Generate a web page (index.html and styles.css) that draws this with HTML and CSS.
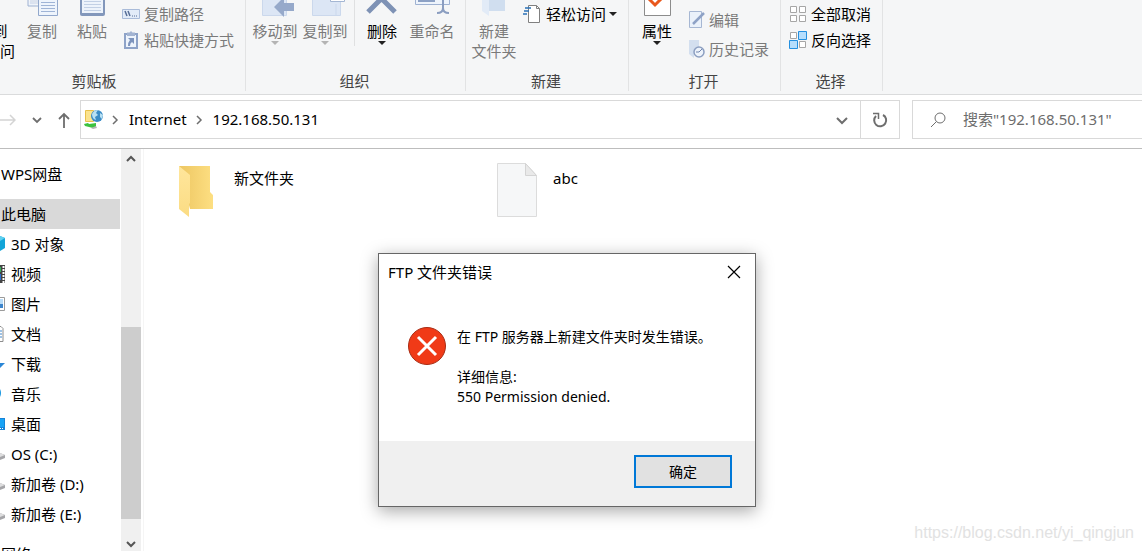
FILE: index.html
```html
<!DOCTYPE html>
<html lang="zh-CN">
<head>
    <meta charset="UTF-8" />
    <meta name="viewport" content="width=device-width, initial-scale=1.0" />
    <title>192.168.50.131</title>
    <link rel="stylesheet" href="styles.css">
</head>
<body>

<header class="ribbon">
    <section class="group group-clipboard">
        <div class="tools">
            <button class="big pin"><svg width="40" height="18"></svg>固定到<br>快速访问</button>
            <button class="big" disabled>
                <svg width="40" height="18" viewBox="0 0 40 18">
                    <path d="M6 0v6h10" fill="#eef3fa" stroke="#9fb2d2"/>
                    <path d="M8 1h8M8 3h8" stroke="#c3d0e6"/>
                    <path d="M16.500-1h19v16.500h-19z" fill="#eef4fc" stroke="#92a8cc"/>
                    <path d="M19 2.500h14M19 5.500h14M19 8.500h14M19 11.500h14" stroke="#9fb4d6"/>
                </svg>
                复制
            </button>
            <button class="big" disabled>
                <svg width="40" height="18" viewBox="0 0 40 18">
                    <path d="M8 0h25v14q0 2-2 2H10q-2 0-2-2z" fill="#8297bb"/>
                    <path d="M10 0h21v13H10z" fill="#edf3fb"/>
                    <path d="M12 1.500h17M12 4.500h17M12 7.500h17M12 10.500h17" stroke="#c2d0e5"/>
                </svg>
                粘贴
            </button>
            <div class="small-list">
                <button class="small" disabled>
                    <svg width="18" height="18" viewBox="0 0 18 18">
                        <path d="M.5 4.500h17v9H.5z" fill="#e2ebf8" stroke="#a9bbd9"/>
                        <path d="M3 6l2 5M6 6l2 5" stroke="#566d96" stroke-width="1.500"/>
                        <path d="M10 11h1M12 11h1M14 11h1" stroke="#566d96"/>
                    </svg>
                    复制路径
                </button>
                <button class="small" disabled>
                    <svg width="18" height="18" viewBox="0 0 18 18">
                        <path d="M3 3h12v14H3z" fill="#eef4fc" stroke="#8ea3c8" stroke-width="2"/>
                        <path d="M5 1.500h2.500L9 0l1.500 1.500H13V5H5z" fill="#a3b4d2"/>
                        <path d="M6 7h6v6l-2-2q-2 1-2 4H6q0-4 2-6z" fill="#7d94bd"/>
                    </svg>
                    粘贴快捷方式
                </button>
            </div>
        </div>
        <h2>剪贴板</h2>
    </section>

    <section class="group group-organize">
        <div class="tools">
            <button class="big" disabled>
                <svg width="40" height="18" viewBox="0 0 40 18">
                    <path d="M7.500-1h24v16.500h-24z" fill="#dce6f5" stroke="#cbd8ec"/>
                    <path d="M19 7l10-10v6h10v8H29v6z" fill="#96a9ca"/>
                </svg>
                移动到
                <i class="caret"></i>
            </button>
            <button class="big" disabled>
                <svg width="40" height="18" viewBox="0 0 40 18">
                    <path d="M7.500-1h28v16.500h-28zM31 4v12" fill="#dce6f5" stroke="#cbd8ec"/>
                    <path d="M25.500-1h14v2.500h-14z" fill="#fff" stroke="#a4b6d3"/>
                </svg>
                复制到
                <i class="caret"></i>
            </button>
            <span class="divider"></span>
            <button class="big">
                <svg width="40" height="18" viewBox="0 0 40 18">
                    <path d="M6 12L19-1M20-1l13 13" stroke="#7e92b5" stroke-width="5"/>
                </svg>
                删除
                <i class="caret"></i>
            </button>
            <button class="big" disabled>
                <svg width="40" height="18" viewBox="0 0 40 18">
                    <path d="M3.500-1h34v5.500h-34z" fill="#eef4fc" stroke="#9fb2d2"/>
                    <path d="M6 0h17v2H6z" fill="#8ca1c5"/>
                    <path d="M31 0v8q0 5-6 5M31 8q0 5 6 5" fill="none" stroke="#8a9dc0" stroke-width="2"/>
                </svg>
                重命名
            </button>
        </div>
        <h2>组织</h2>
    </section>

    <section class="group group-new">
        <div class="tools">
            <button class="big" disabled>
                <svg width="40" height="18" viewBox="0 0 40 18">
                    <path d="M15 0h16v11H15z" fill="#d0deef"/>
                    <path d="M8 0h7v16l-7-5z" fill="#e2ebf7"/>
                </svg>
                新建<br>文件夹
            </button>
            <div class="small-list">
                <button class="small">
                    <svg width="20" height="20" viewBox="0 0 20 20">
                        <path d="M5.500 1.500h8l3 3v14h-11z" fill="#fff" stroke="#808080"/>
                        <path d="M13.500 1.500v3h3" fill="none" stroke="#808080"/>
                        <path d="M2 4h6M1 7h5M0 10h4" stroke="#2a72b8" stroke-width="1.500"/>
                    </svg>
                    轻松访问
                    <i class="caret"></i>
                </button>
            </div>
        </div>
        <h2>新建</h2>
    </section>

    <section class="group group-open">
        <div class="tools">
            <button class="big">
                <svg width="40" height="18" viewBox="0 0 40 18">
                    <path d="M7.500-1h26v16.500h-26z" fill="#fff" stroke="#8c8c8c"/>
                    <path d="M12-1l6 6 8-8" fill="none" stroke="#e9581c" stroke-width="3"/>
                </svg>
                属性
                <i class="caret"></i>
            </button>
            <div class="small-list">
                <button class="small" disabled>
                    <svg width="16" height="18" viewBox="0 0 16 18">
                        <path d="M.5.5h12v16H.5z" fill="#eaf1fa" stroke="#a6b7d3"/>
                        <path d="M4 13L15 2" stroke="#8ea2c6" stroke-width="2.500"/>
                    </svg>
                    编辑
                </button>
                <button class="small" disabled>
                    <svg width="16" height="18" viewBox="0 0 16 18">
                        <path d="M0 0h10v14H5v4l-5-4z" fill="#d3dfef"/>
                        <circle cx="10" cy="12" r="5" fill="#edf3fb" stroke="#8c9fc1" stroke-width="1.500"/>
                        <path d="M10 12l3-3M10 12H7" stroke="#7387ae"/>
                    </svg>
                    历史记录
                </button>
            </div>
        </div>
        <h2>打开</h2>
    </section>

    <section class="group group-select">
        <div class="tools">
            <div class="small-list">
                <button class="small">
                    <svg width="18" height="18" viewBox="0 0 18 18" fill="#fff" stroke="#a6a6a6">
                        <path d="M1.500 1.500h6v6h-6zM10.500 1.500h6v6h-6zM1.500 10.500h6v6h-6zM10.500 10.500h6v6h-6z"/>
                    </svg>
                    全部取消
                </button>
                <button class="small">
                    <svg width="18" height="18" viewBox="0 0 18 18">
                        <path d="M1.500 1.500h6v6h-6zM10.500 10.500h6v6h-6z" fill="#fff" stroke="#a6a6a6"/>
                        <path d="M9.500.5h8v8h-8zM.5 9.500h8v8h-8z" fill="#b5defd" stroke="#2490e0"/>
                    </svg>
                    反向选择
                </button>
            </div>
        </div>
        <h2>选择</h2>
    </section>
</header>

<div class="navbar">
    <div class="history">
        <button aria-label="前进" disabled>
            <svg width="16" height="16" viewBox="0 0 16 16"><path d="M0 8h15M10 3l5 5-5 5" stroke="#d4d4d4" stroke-width="1.500" fill="none"/></svg>
        </button>
        <button aria-label="最近浏览的位置">
            <svg width="12" height="16" viewBox="0 0 12 16"><path d="M2 6l4 4 4-4" stroke="#6e6e6e" stroke-width="1.800" fill="none"/></svg>
        </button>
        <button aria-label="上移">
            <svg width="12" height="16" viewBox="0 0 12 16"><path d="M6 16V2M1 7l5-5 5 5" stroke="#6e6e6e" stroke-width="1.800" fill="none"/></svg>
        </button>
    </div>
    <div class="address">
        <svg width="20" height="22" viewBox="0 0 20 22">
            <path d="M2.500 1.500h8v11h-8z" fill="#fbe38e" stroke="#e8c14b"/>
            <circle cx="14" cy="7" r="6" fill="#3b8cc6"/>
            <path d="M9 5q2-4 6-4l-2 3 2 2-3 2 1 3q-4-1-4-6zM17 4l3 2-1 4-2-2z" fill="#b9e0f2"/>
            <path d="M1 15l4-1 1 1 7-1v4l-3 1-8-2z" fill="#3cc23f"/>
            <path d="M8 19l5-2 1 2-4 1z" fill="#b4b4b4"/>
        </svg>
        <svg class="sep" width="8" height="10" viewBox="0 0 8 10"><path d="M2 1l4 4-4 4" stroke="#6e6e6e" stroke-width="1.500" fill="none"/></svg>
        <a href="#">Internet</a>
        <svg class="sep" width="8" height="10" viewBox="0 0 8 10"><path d="M2 1l4 4-4 4" stroke="#6e6e6e" stroke-width="1.500" fill="none"/></svg>
        <a href="#">192.168.50.131</a>
        <button class="drop" aria-label="以前的位置">
            <svg width="12" height="10" viewBox="0 0 12 10"><path d="M1 3l5 5 5-5" stroke="#6e6e6e" stroke-width="2" fill="none"/></svg>
        </button>
        <button class="refresh" aria-label="刷新">
            <svg width="16" height="16" viewBox="0 0 16 16">
                <path d="M11 3a6 6 0 1 1-7 1" stroke="#6e6e6e" stroke-width="2" fill="none"/>
                <path d="M1 1.500h5.500V7" stroke="#6e6e6e" stroke-width="1.500" fill="none"/>
            </svg>
        </button>
    </div>
    <label class="search">
        <svg width="16" height="16" viewBox="0 0 16 16" fill="none" stroke="#6e6e6e"><circle cx="10" cy="6" r="5"/><path d="M6.500 9.500L1 15"/></svg>
        <input type="text" aria-label="搜索" placeholder='搜索"192.168.50.131"'>
    </label>
</div>

<div class="main">
    <nav class="tree">
        <a href="#" class="root">WPS网盘</a>
        <a href="#" class="root selected">此电脑</a>
        <a href="#">
            <svg width="6" height="18" viewBox="0 0 6 18"><path d="M0 1l5 2v10l-5 3z" fill="#12a5d8"/><path d="M0 1l5 2-5 3z" fill="#5fd0f0"/></svg>
            3D 对象
        </a>
        <a href="#">
            <svg width="6" height="18" viewBox="0 0 6 18"><path d="M0 0h5v18H0z" fill="#444"/><path d="M0 2h1v5H0z" fill="#35b15a"/><path d="M0 9h1v6H0z" fill="#2b6fd0"/><path d="M3.500 1v17" stroke="#fff" stroke-width="2" stroke-dasharray="2 1"/></svg>
            视频
        </a>
        <a href="#">
            <svg width="6" height="18" viewBox="0 0 6 18"><path d="M-1 2.500h5.500v13H-1z" fill="#fff" stroke="#9b9b9b"/><path d="M0 4h3v5H0z" fill="#b8dcf8"/><path d="M0 9h3v4H0z" fill="#3d85cc"/></svg>
            图片
        </a>
        <a href="#">
            <svg width="6" height="18" viewBox="0 0 6 18"><path d="M-1 1.500h2l2 2v13h-4z" fill="#fff" stroke="#8e8e8e"/><path d="M0 6h2M0 9h2M0 12h2" stroke="#3d85cc"/></svg>
            文档
        </a>
        <a href="#">
            <svg width="6" height="18" viewBox="0 0 6 18"><path d="M0 8h5l-5 5z" fill="#2a86d6"/></svg>
            下载
        </a>
        <a href="#">
            <svg width="6" height="18" viewBox="0 0 6 18"><path d="M0 4q2 4 0 8z" fill="#1796e0"/></svg>
            音乐
        </a>
        <a href="#">
            <svg width="6" height="18" viewBox="0 0 6 18"><path d="M0 3h5v12H0z" fill="#1683d8"/><path d="M0 4h4v8H0z" fill="#19a3f5"/><path d="M0 13.500h4" stroke="#fff" stroke-dasharray="1 1"/></svg>
            桌面
        </a>
        <a href="#">
            <svg width="6" height="18" viewBox="0 0 6 18"><path d="M0 8l5 2v3l-5 2z" fill="#a5a5a8"/><path d="M0 8l5 2-5 2z" fill="#dededf"/></svg>
            OS (C:)
        </a>
        <a href="#">
            <svg width="6" height="18" viewBox="0 0 6 18"><path d="M0 8l5 2v3l-5 2z" fill="#a5a5a8"/><path d="M0 8l5 2-5 2z" fill="#dededf"/></svg>
            新加卷 (D:)
        </a>
        <a href="#">
            <svg width="6" height="18" viewBox="0 0 6 18"><path d="M0 8l5 2v3l-5 2z" fill="#a5a5a8"/><path d="M0 8l5 2-5 2z" fill="#dededf"/></svg>
            新加卷 (E:)
        </a>
        <a href="#" class="root network">网络</a>
    </nav>
    <div class="scrollbar">
        <button aria-label="向上滚动"><svg width="10" height="8" viewBox="0 0 10 8"><path d="M1 6l4-4 4 4" stroke="#555" stroke-width="2" fill="none"/></svg></button>
        <div class="track"><div class="thumb"></div></div>
        <button aria-label="向下滚动"><svg width="10" height="8" viewBox="0 0 10 8"><path d="M1 2l4 4 4-4" stroke="#555" stroke-width="2" fill="none"/></svg></button>
    </div>
    <main class="files">
        <a href="#" class="file">
            <svg width="54" height="56" viewBox="0 0 54 56">
                <defs>
                    <linearGradient id="back" x1="0" x2="1"><stop offset="0" stop-color="#edc662"/><stop offset="1" stop-color="#fddf82"/></linearGradient>
                    <linearGradient id="front" x1="0" x2="0" y1="0" y2="1"><stop offset="0" stop-color="#ffe69c"/><stop offset="1" stop-color="#fbdc83"/></linearGradient>
                </defs>
                <path d="M8 4h31v26l3 3v14H19z" fill="url(#back)"/>
                <path d="M8 4l11 9v28l-1 1v13L8 47z" fill="url(#front)"/>
            </svg>
            新文件夹
        </a>
        <a href="#" class="file">
            <svg width="54" height="56" viewBox="0 0 54 56">
                <path d="M7.500 1.500h28l11 12v41h-39z" fill="#f6f7f8" stroke="#dcdcdc"/>
                <path d="M35.500 1.500v12h11z" fill="#e9e9e9" stroke="#d4d4d4"/>
            </svg>
            abc
        </a>
    </main>
</div>

<div class="dialog" role="dialog" aria-labelledby="dialog-title">
    <div class="titlebar">
        <h1 id="dialog-title">FTP 文件夹错误</h1>
        <button aria-label="关闭"><svg width="14" height="14" viewBox="0 0 14 14"><path d="M1 1l12 12M13 1L1 13" stroke="#000" stroke-width="1.200"/></svg></button>
    </div>
    <div class="content">
        <svg width="38" height="38" viewBox="0 0 38 38">
            <circle cx="19" cy="19" r="18.500" fill="#f03a17" stroke="#a82c14"/>
            <path d="M10 10l18 18M28 10L10 28" stroke="#fff" stroke-width="3"/>
        </svg>
        <div class="message">
            <p>在 FTP 服务器上新建文件夹时发生错误。</p>
            <p>详细信息:<br>550 Permission denied.</p>
        </div>
    </div>
    <div class="actions">
        <button class="ok">确定</button>
    </div>
</div>

<div class="watermark">https://blog.csdn.net/yi_qingjun</div>

</body>
</html>
```

FILE: styles.css
```css
* {
    box-sizing: border-box;
}

body {
    margin: 0;
    height: 100vh;
    display: flex;
    flex-direction: column;
    overflow: hidden;
    background: #fff;
    color: #000;
    font-family: "Noto Sans", "Noto Sans CJK SC", sans-serif;
    font-size: 15px;
    line-height: 20px;
}

button {
    padding: 0;
    border: none;
    background: none;
    color: inherit;
    font: inherit;
}

a {
    color: inherit;
    text-decoration: none;
}

svg {
    display: block;
    flex-shrink: 0;
}

h1,
h2,
p {
    margin: 0;
    font-size: inherit;
    font-weight: normal;
}

/* ribbon */
.ribbon {
    display: flex;
    flex-shrink: 0;
    padding-bottom: 3px;
    background: #f5f6f7;
    border-bottom: 1px solid #dadbdc;
    white-space: nowrap;
}

.group {
    display: flex;
    flex-direction: column;
    flex-shrink: 0;
    border-right: 1px solid #e2e3e4;
}

.group-clipboard {
    width: 301px;
    margin-left: -55px;
}

.group-organize {
    width: 220px;
}

.group-new {
    width: 163px;
}

.group-open {
    width: 152px;
}

.group-select {
    width: 102px;
}

.tools {
    display: flex;
    height: 71px;
    padding-left: 3px;
}

.group-clipboard .tools {
    padding-left: 8px;
}

.group-organize .tools {
    padding-left: 4px;
}

.group-select .tools {
    padding-left: 0;
}

.group h2 {
    padding-right: 2px;
    color: #444;
    text-align: center;
}

.big {
    display: flex;
    flex-direction: column;
    align-items: center;
    width: 50px;
}

.big svg {
    margin-bottom: 3px;
}

.pin {
    width: 64px;
}

.ribbon button:disabled {
    color: #7a7a7a;
}

.caret {
    border: 4px solid transparent;
    border-top-color: #222;
    border-bottom: none;
}

button:disabled .caret {
    border-top-color: #b4b4b4;
}

.divider {
    width: 1px;
    height: 46px;
    margin: 0 2px 0 4px;
    background: #dfe0e1;
}

.small-list {
    display: flex;
    flex-direction: column;
    gap: 6px;
    padding: 4px 0 0 5px;
}

.group-new .small-list {
    padding-left: 4px;
}

.group-open .small-list {
    gap: 9px;
    padding: 10px 0 0 7px;
}

.group-select .small-list {
    padding-left: 8px;
}

.small {
    display: flex;
    align-items: center;
    gap: 4px;
    height: 20px;
}

.group-new .small {
    gap: 3px;
}

/* navigation bar */
.navbar {
    display: flex;
    flex-shrink: 0;
    padding: 5px 0 9px;
    border-bottom: 1px solid #bdbdbd;
}

.history {
    display: flex;
    align-items: center;
    gap: 15px;
    width: 80px;
}

.address {
    display: flex;
    flex: 1;
    align-items: center;
    height: 39px;
    padding-left: 2px;
    border: 1px solid #d9d9d9;
}

.address a {
    padding-bottom: 2px;
}

.sep {
    margin: 0 10px 0 8px;
}

.drop {
    margin-left: auto;
    padding: 0 12px;
}

.refresh {
    display: flex;
    align-items: center;
    justify-content: center;
    align-self: stretch;
    width: 39px;
    border-left: 1px solid #d9d9d9;
}

.search {
    display: flex;
    align-items: center;
    gap: 17px;
    width: 230px;
    margin-left: 12px;
    padding-left: 17px;
    border: 1px solid #d9d9d9;
    border-right: none;
}

.search input {
    flex: 1;
    min-width: 0;
    padding: 0 0 2px;
    border: none;
    outline: none;
    background: none;
    font: inherit;
}

.search input::placeholder {
    color: #6d6d6d;
}

/* folder tree and files */
.main {
    display: flex;
    flex: 1;
    min-height: 0;
}

.tree {
    width: 120px;
    padding-top: 10px;
    overflow: hidden;
    white-space: nowrap;
}

.tree a {
    display: flex;
    align-items: center;
    gap: 5px;
    height: 30px;
}

.tree .root {
    padding-left: 1px;
}

.tree .selected {
    margin-top: 10px;
    background: #d9d9d9;
}

.tree .network {
    margin-top: 10px;
}

.scrollbar {
    display: flex;
    flex-direction: column;
    width: 20px;
    margin-left: 1px;
    background: #f0f0f0;
}

.scrollbar button {
    display: flex;
    align-items: center;
    justify-content: center;
    height: 20px;
}

.scrollbar button:last-child {
    height: 15px;
}

.track {
    display: flex;
    flex: 1;
    flex-direction: column;
    justify-content: flex-end;
    padding-bottom: 17px;
}

.thumb {
    height: 55%;
    background: #cdcdcd;
}

.files {
    display: grid;
    flex: 1;
    grid-template-columns: repeat(auto-fill, 319px);
    align-content: start;
    margin-left: 2px;
    padding: 13px 0 0 27px;
    border-left: 1px solid #f5f5f5;
}

.file {
    display: flex;
    gap: 9px;
    line-height: 32px;
}

/* error dialog */
.dialog {
    position: absolute;
    top: 253px;
    left: 378px;
    width: 378px;
    background: #fff;
    border: 1px solid #666;
    box-shadow: 0 4px 16px rgba(0, 0, 0, 0.35);
}

.titlebar {
    display: flex;
    align-items: center;
    justify-content: space-between;
    height: 35px;
    padding: 0 14px 0 9px;
}

.content {
    display: flex;
    gap: 11px;
    padding: 38px 29px 34px;
    font-size: 14px;
    white-space: nowrap;
}

.message p + p {
    margin-top: 20px;
}

.actions {
    display: flex;
    justify-content: flex-end;
    padding: 14px 23px 18px;
    background: #f0f0f0;
}

.ok {
    width: 98px;
    height: 33px;
    background: #e1e1e1;
    border: 2px solid #0078d7;
    font-size: 14px;
}

.watermark {
    position: absolute;
    right: 8px;
    bottom: 8px;
    color: #e2e2e2;
    font-family: "Liberation Sans", sans-serif;
    font-size: 16px;
}
```
